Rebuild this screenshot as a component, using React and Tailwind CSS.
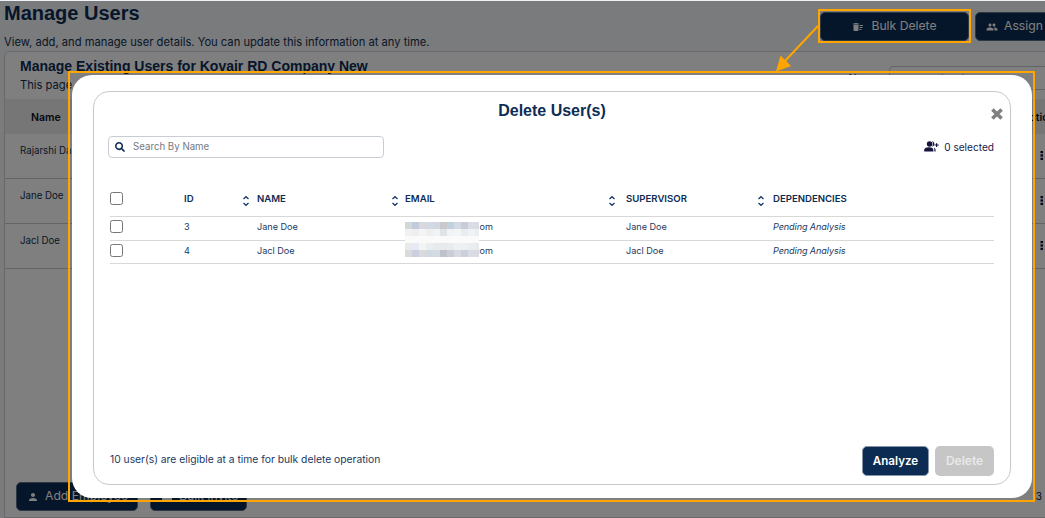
import React from 'react';
import { FaSearch } from 'react-icons/fa';
import { MdDeleteSweep, MdGroup, MdPerson, MdEmail } from 'react-icons/md';

const employees = ['Rajarshi Das', 'Jane Doe', 'Jacl Doe'];

const users = [
    { id: 3, name: 'Jane Doe', mail: 'om', supervisor: 'Jane Doe' },
    { id: 4, name: 'Jacl Doe', mail: 'com', supervisor: 'Jacl Doe' },
];

// redacted part of the email column, one colour per 7px block
const mosaic = [
    ['#d4d7d7', '#c2cbdb', '#d9d8dc', '#d2dae4', '#d2d7e1', '#c9c9cc', '#c3d1df', '#d3dae3', '#c9cbd6', '#dadde6', '#dbdbe2'],
    ['#f0f1f3', '#eceef2', '#f5f5f5', '#eceef0', '#f0f2f4', '#e0e3e8', '#f2f3f5', '#f4f5f6', '#eaedf0', '#f1f2f5', '#ebedf0'],
    ['#fafafa', '#fafafa', '#fafafa', '#fafafa', '#fafafa', '#fafafa', '#fafafa', '#fafafa', '#fafafa', '#fafafa', '#fafafa'],
    ['#e7eae9', '#e7eaf3', '#f3f4f6', '#ebeef0', '#e7eaeb', '#e7e9ec', '#e8ecef', '#eff0f2', '#edf0f1', '#ebedef', '#e8eaed'],
    ['#d9dadb', '#c9cfde', '#dcd9dc', '#cfdae3', '#d6dbe3', '#bdc2cb', '#cbced6', '#d6dbe3', '#cbd1dc', '#d8dce4', '#dbdbdf'],
];

const cols = 'grid grid-cols-[74px_73px_148px_221px_147px_1fr]';

const SortIcon = ({ className }) => (
    <svg width="8" height="12" viewBox="0 0 8 12" fill="none" stroke="#173a63" strokeWidth="1.3" className={`absolute top-[3px] ${className}`}>
        <path d="M1.5 4 L4 1.7 L6.5 4" />
        <path d="M1.5 8 L4 10.3 L6.5 8" />
    </svg>
);

const Checkbox = () => (
    <span className="block w-[13px] h-[13px] rounded-[2.5px] border border-[#767676] bg-white"></span>
);

const HeadCell = ({ label, sort }) => (
    <div className="relative">
        {sort && <SortIcon className={sort} />}
        {label}
    </div>
);

const Kebab = () => (
    <svg width="4" height="10" viewBox="0 0 4 10" fill="#10103a">
        <rect x="0.5" width="2.5" height="2.2" />
        <rect x="0.5" y="3.4" width="2.5" height="2.2" />
        <rect x="0.5" y="6.8" width="2.5" height="2.2" />
    </svg>
);

const ManageUsers = () => (
    <div className="h-full flex flex-col bg-[#f5f6fa] text-[#12304f]">
        <div className="h-[50px] flex justify-between shrink-0 pl-1">
            <div>
                <h1 className="font-['Liberation_Sans',sans-serif] font-bold text-[20px] leading-[24px] text-[#0d2c54]">Manage Users</h1>
                <p className="mt-[9px] text-[11.2px] leading-[16px] whitespace-nowrap">View, add, and manage user details. You can update this information at any time.</p>
            </div>
            <div className="flex gap-[6px] pt-[11px] -mr-[60px] text-[12.2px] text-white">
                <div className="w-[149px] h-[29px] rounded-[5px] bg-[#0d2c54] border border-[#5c7088] flex items-center justify-center gap-[7px]">
                    <MdDeleteSweep size={12} />
                    Bulk Delete
                </div>
                <div className="w-[130px] h-[29px] rounded-[5px] bg-[#0d2c54] border border-[#5c7088] flex items-center pl-[10px] gap-[6px]">
                    <MdGroup size={12} />
                    Assign
                </div>
            </div>
        </div>
        <div className="flex-1 ml-1 -mr-4 rounded-tl-[6px] border border-[#d3d3d6] bg-white flex flex-col">
            <div className="h-[47px] shrink-0 flex justify-between pl-[15px]">
                <div>
                    <h2 className="mt-[6px] font-['Liberation_Sans',sans-serif] font-bold text-[14px] leading-[17px] text-[#0d2c54] whitespace-nowrap">Manage Existing Users for Kovair RD Company New</h2>
                    <p className="mt-[2px] text-[11.2px] leading-[16px]">This page</p>
                </div>
                <div className="flex gap-[10px] pt-[14px] text-[11px] leading-[24px]">
                    <span>Name</span>
                    <div className="w-[171px] h-[24px] rounded-[4px] border border-[#c9c9c9] pl-2">To Construct</div>
                </div>
            </div>
            <div className="h-[35px] shrink-0 bg-[#ececec] flex items-center justify-between pl-[26px] pr-[5px] pt-[2px] text-[10.5px] font-semibold text-[#0b1020]">
                <span>Name</span>
                <span>Action</span>
            </div>
            {employees.map((name) => (
                <div key={name} className="h-[45px] shrink-0 border-b border-[#c8c8c8] flex justify-between pl-[15px] pr-[16px] pt-[10px] text-[9.7px] leading-[14px]">
                    <span>{name}</span>
                    <span className="pt-[7px]"><Kebab /></span>
                </div>
            ))}
            <div className="mt-auto mb-[6px] pl-[11px] flex gap-3 text-[12.2px] text-white">
                <div className="w-[122px] h-[29px] rounded-[5px] bg-[#0d2c54] border border-[#5c7088] flex items-center pl-[10px] gap-[6px]">
                    <MdPerson size={12} />
                    Add Employee
                </div>
                <div className="w-[97px] h-[29px] rounded-[5px] bg-[#0d2c54] border border-[#5c7088] flex items-center pl-[10px] gap-[6px]">
                    <MdEmail size={12} />
                    Bulk Invite
                </div>
                <span className="ml-auto pr-[18px] pt-[7px] text-[10px] text-[#10103a]">3</span>
            </div>
        </div>
    </div>
);

const DeleteUsersModal = () => (
    <div className="absolute left-[72px] top-[75px] w-[960px] h-[423px] rounded-[20px] bg-white px-[21px] pt-[16px] pb-[13px] text-[#1b3a5f]">
        <div className="h-full border border-[#c9c9c9] rounded-[16px] px-[14px] flex flex-col">
            <div className="relative h-[44px] shrink-0 text-center pt-[9px]">
                <h3 className="font-['Liberation_Sans',sans-serif] font-bold text-[16px] leading-[20px] text-[#0d2c54]">Delete User(s)</h3>
                <svg width="12" height="12" viewBox="0 0 12 12" fill="none" stroke="#808080" strokeWidth="3.6" className="absolute -right-[7px] top-[16px]">
                    <path d="M1.4 1.4 L10.6 10.6 M10.6 1.4 L1.4 10.6" />
                </svg>
            </div>
            <div className="flex justify-between items-center h-[22px] shrink-0 pr-[2px]">
                <div className="w-[276px] h-[22px] rounded-[4px] border border-[#c8ccd3] flex items-center pl-[6px] gap-[8px] text-[9.7px] text-[#75797e]">
                    <FaSearch size={10} className="text-[#0d2c54]" />
                    <span className="pt-px">Search By Name</span>
                </div>
                <div className="flex items-center gap-[5px] text-[10.1px] text-[#1a1a4a]">
                    <svg width="15" height="11" viewBox="0 0 15 11" fill="#14143c">
                        <circle cx="5.6" cy="3" r="2.8" />
                        <path d="M0.2 10.6 V9 C0.2 7 3 6.3 5 6.3 C7 6.3 9.4 7 9.4 9 V10.6 Z" />
                        <path d="M8 0.3 C9.5 0.5 10.4 1.6 10.4 2.9 C10.4 4.2 9.5 5.2 8 5.5 C9.4 4 9.4 1.6 8 0.3 Z" />
                        <path d="M9.8 6.5 C11.2 7.2 11.6 8 11.6 9 V10.6 H10.4 V9 C10.4 8 10.3 7.4 9.8 6.5 Z" />
                        <path d="M12 2.2 h1.2 v1.3 h1.5 v1.1 h-1.5 v1.5 h-1.2 v-1.5 h-1.4 v-1.1 h1.4 z" />
                    </svg>
                    <span className="pt-px">0 selected</span>
                </div>
            </div>
            <div className="relative mt-[23px] mx-[2px] text-[9.1px]">
                <div className={`${cols} h-[36px] border-b border-[#d8d8d8] items-center text-[9.6px] font-semibold leading-[14px] text-[#0d2c54]`}>
                    <Checkbox />
                    <HeadCell label="ID" />
                    <HeadCell label="NAME" sort="-left-[15px]" />
                    <HeadCell label="EMAIL" sort="-left-[14px]" />
                    <HeadCell label="SUPERVISOR" sort="-left-[18px]" />
                    <HeadCell label="DEPENDENCIES" sort="-left-[16px]" />
                </div>
                <div>
                    {users.map((user) => (
                        <div key={user.id} className={`${cols} h-[24px] last:h-[23px] border-b border-[#d8d8d8] items-center pb-[4px] last:pb-[3px] leading-[14px]`}>
                            <Checkbox />
                            <span>{user.id}</span>
                            <span>{user.name}</span>
                            <span className="w-[88px] text-right">{user.mail}</span>
                            <span>{user.supervisor}</span>
                            <span className="italic tracking-[-0.1px]">Pending Analysis</span>
                        </div>
                    ))}
                </div>
                <div className="absolute left-[295px] top-[41px] w-[74px] overflow-hidden">
                    {mosaic.map((line, i) => (
                        <div key={i} className="flex w-[77px] h-[7px]">
                            {line.map((color, j) => (
                                <span key={j} className="w-[7px] h-[7px]" style={{ backgroundColor: color }}></span>
                            ))}
                        </div>
                    ))}
                </div>
            </div>
            <div className="mt-auto mb-[8px] ml-[2px] mr-[2px] flex items-center">
                <p className="text-[10.3px] mb-[2px]">10 user(s) are eligible at a time for bulk delete operation</p>
                <button className="ml-auto w-[67px] h-[30px] rounded-[5px] border border-[#8795a8] bg-[#0d2c54] pt-px text-white text-[11.6px] font-semibold">Analyze</button>
                <button className="ml-[6px] w-[59px] h-[30px] rounded-[5px] bg-[#c6c6c6] text-[#e8e8e8] text-[12px] font-semibold">Delete</button>
            </div>
        </div>
    </div>
);

const Callout = () => (
    <svg width="1045" height="518" className="absolute inset-0" fill="none" stroke="#ffa500" strokeWidth="2">
        <rect x="819" y="10" width="151" height="32" />
        <rect x="69" y="72" width="965" height="429" />
        <path d="M818 26 L785 61" />
        <path d="M776 71.5 L780.5 55.5 L791 66 Z" fill="#ffa500" stroke="none" />
    </svg>
);

const App = () => (
    <div className="relative w-[1045px] h-[518px] overflow-hidden bg-[#eef2f7] pt-px font-[Inter,sans-serif]">
        <ManageUsers />
        <div className="absolute inset-x-0 top-px bottom-0 bg-black/50"></div>
        <DeleteUsersModal />
        <Callout />
    </div>
);

export default App;
